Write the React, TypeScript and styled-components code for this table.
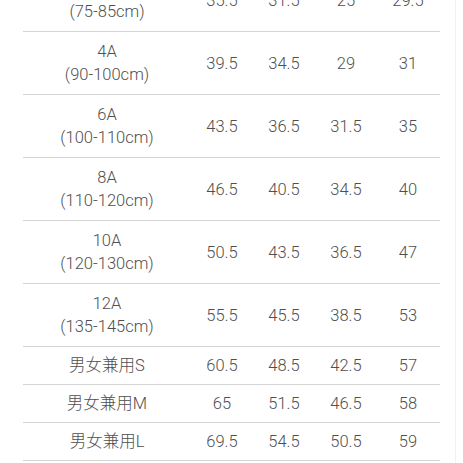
import styled, { createGlobalStyle } from 'styled-components';

type Row = { size: string; height?: string; values: string[] };

const ROWS: Row[] = [
  { size: '2A', height: '(75-85cm)', values: ['35.5', '31.5', '25', '29.5'] },
  { size: '4A', height: '(90-100cm)', values: ['39.5', '34.5', '29', '31'] },
  { size: '6A', height: '(100-110cm)', values: ['43.5', '36.5', '31.5', '35'] },
  { size: '8A', height: '(110-120cm)', values: ['46.5', '40.5', '34.5', '40'] },
  { size: '10A', height: '(120-130cm)', values: ['50.5', '43.5', '36.5', '47'] },
  { size: '12A', height: '(135-145cm)', values: ['55.5', '45.5', '38.5', '53'] },
  { size: '男女兼用S', values: ['60.5', '48.5', '42.5', '57'] },
  { size: '男女兼用M', values: ['65', '51.5', '46.5', '58'] },
  { size: '男女兼用L', values: ['69.5', '54.5', '50.5', '59'] },
];

const GlobalStyle = createGlobalStyle`
  html, body {
    margin: 0;
    padding: 0;
    background: #ffffff;
    overflow: hidden;
  }
`;

const Page = styled.div`
  width: 463px;
  height: 463px;
  overflow: hidden;
  background: #ffffff;
  position: relative;
  font-family: Roboto, 'Noto Sans CJK SC', sans-serif;
  font-weight: 300;
  color: #4f4f4f;
`;

const EdgeLine = styled.div`
  position: absolute;
  top: 0;
  bottom: 0;
  left: 455px;
  width: 1px;
  background: #f1f1f1;
`;

const Table = styled.div`
  margin: -31px 0 0 23px;
  width: 417px;
`;

const TableRow = styled.div<{ $tall: boolean }>`
  display: grid;
  grid-template-columns: 168px repeat(4, 62px);
  align-items: center;
  height: ${({ $tall }) => ($tall ? 63 : 38)}px;
  box-sizing: border-box;
  border-bottom: 1px solid #d4d4d4;
`;

const SizeCell = styled.div`
  display: flex;
  flex-direction: column;
  align-items: center;
  font-size: 16.5px;
  line-height: 23px;
  white-space: nowrap;
`;

const ValueCell = styled.div`
  text-align: center;
  font-size: 16.5px;
  line-height: 23px;
`;

export default function App() {
  return (
    <Page>
      <GlobalStyle />
      <Table>
        {ROWS.map((row) => (
          <TableRow key={row.size} $tall={!!row.height}>
            <SizeCell>
              <span>{row.size}</span>
              {row.height && <span>{row.height}</span>}
            </SizeCell>
            {row.values.map((v, i) => (
              <ValueCell key={i}>{v}</ValueCell>
            ))}
          </TableRow>
        ))}
      </Table>
      <EdgeLine />
    </Page>
  );
}
